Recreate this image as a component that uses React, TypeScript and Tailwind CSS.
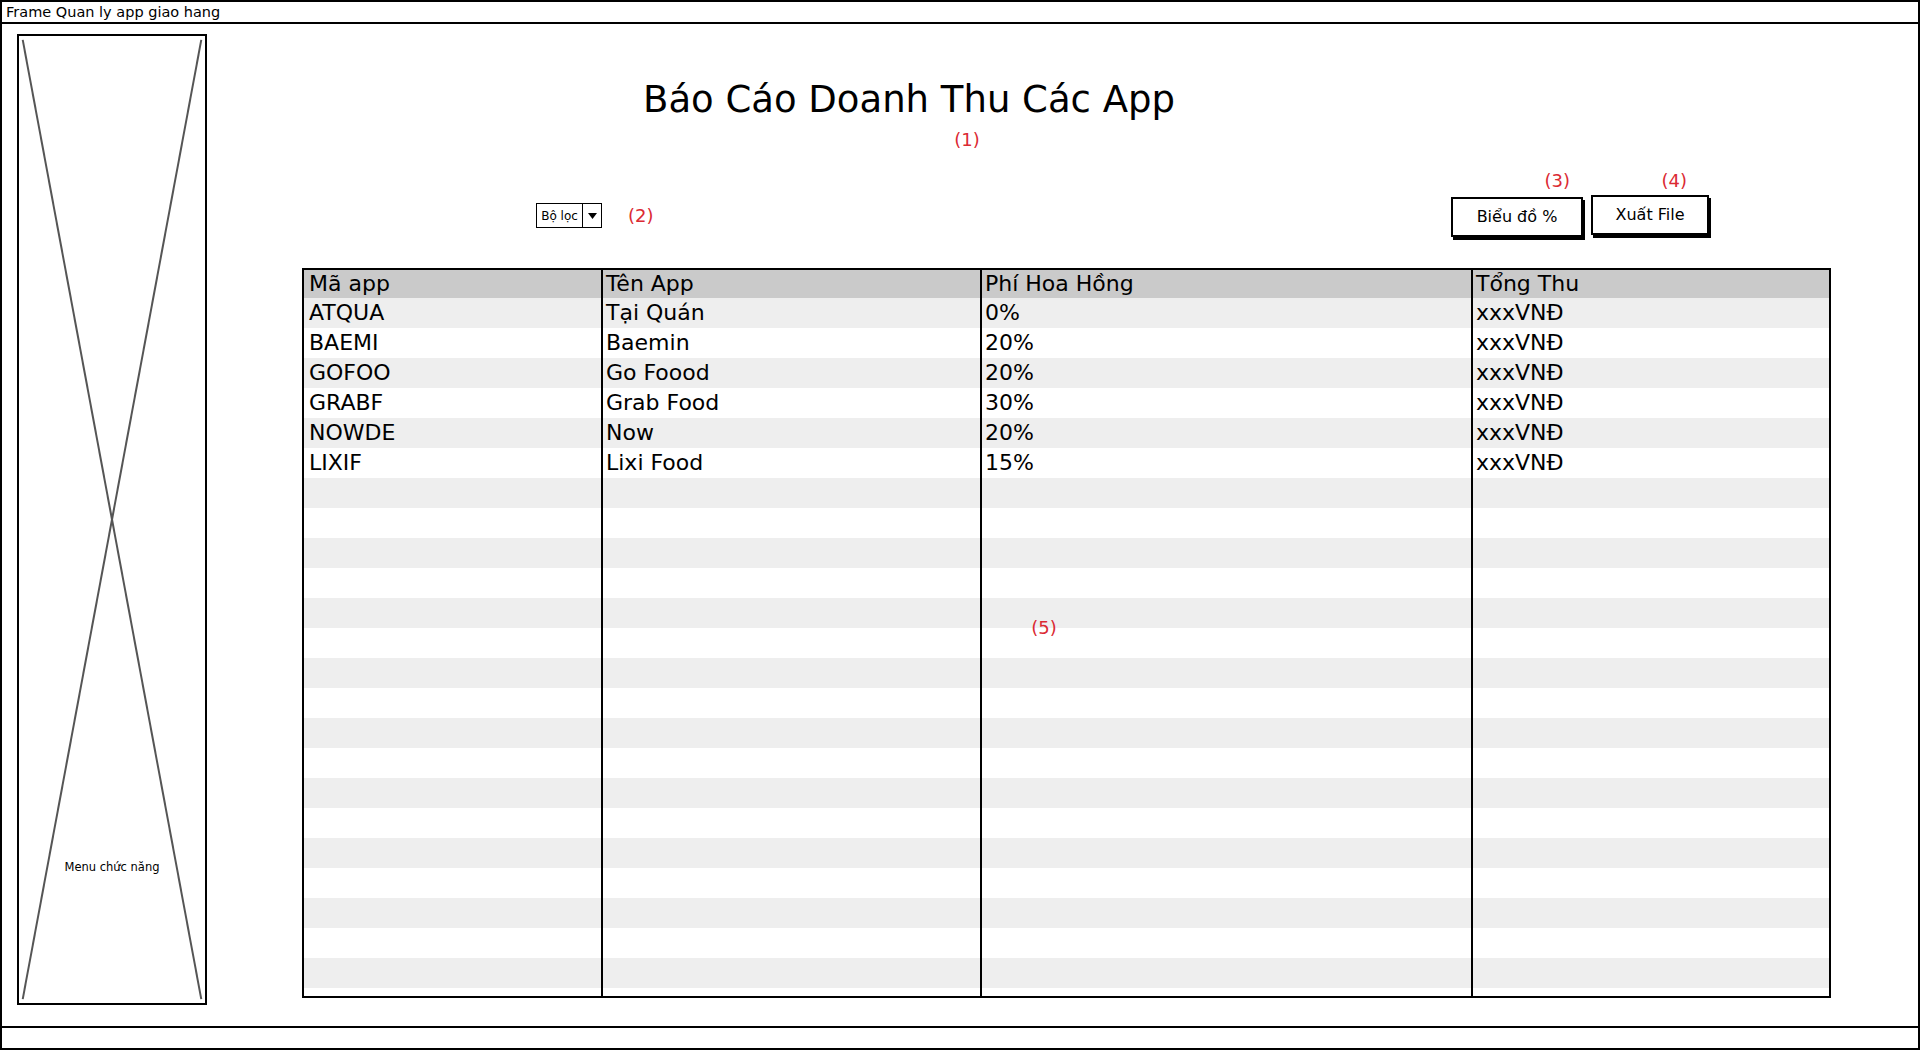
import React from 'react';

// Wireframe: Báo Cáo Doanh Thu Các App

const FONT = "font-['DejaVu_Sans','Noto_Sans',sans-serif]";

const rows = [
  { ma: 'ATQUA', ten: 'Tại Quán', phi: '0%', tong: 'xxxVNĐ' },
  { ma: 'BAEMI', ten: 'Baemin', phi: '20%', tong: 'xxxVNĐ' },
  { ma: 'GOFOO', ten: 'Go Foood', phi: '20%', tong: 'xxxVNĐ' },
  { ma: 'GRABF', ten: 'Grab Food', phi: '30%', tong: 'xxxVNĐ' },
  { ma: 'NOWDE', ten: 'Now', phi: '20%', tong: 'xxxVNĐ' },
  { ma: 'LIXIF', ten: 'Lixi Food', phi: '15%', tong: 'xxxVNĐ' },
];

function Label({ children }: { children: React.ReactNode }) {
  return <span className="text-[18px] leading-[22px] text-[#db2a33]">{children}</span>;
}

function SidebarPlaceholder() {
  return (
    <div className="relative ml-[15px] mt-[10px] mb-[21px] w-[190px] border-2 border-black bg-white">
      <svg className="absolute inset-0 h-full w-full" viewBox="0 0 100 100" preserveAspectRatio="none">
        <line x1="2" y1="0.4" x2="98" y2="99.6" stroke="#555" strokeWidth="2" vectorEffect="non-scaling-stroke" />
        <line x1="98" y1="0.4" x2="2" y2="99.6" stroke="#555" strokeWidth="2" vectorEffect="non-scaling-stroke" />
      </svg>
      <div className="absolute inset-x-0 bottom-[127px] text-center text-[11.5px] leading-[18px] text-black">
        Menu chức năng
      </div>
    </div>
  );
}

function FilterBox() {
  return (
    <div className="flex h-[25px] w-[66px] border-[1.5px] border-black bg-white">
      <div className="flex flex-1 items-center justify-center text-[12px] leading-none">Bộ lọc</div>
      <div className="flex w-[19px] items-center justify-center border-l-[1.5px] border-black">
        <svg width="9" height="6" viewBox="0 0 9 6">
          <path d="M0 0 L9 0 L4.5 6 Z" fill="#000" />
        </svg>
      </div>
    </div>
  );
}

function ReportTable() {
  const stripes = Array.from({ length: 24 }, (_, i) => rows[i] ?? null);
  return (
    <div className="relative ml-[95px] mt-[31px] h-[730px] w-[1529px] overflow-hidden border-2 border-black bg-white">
      <div className="grid h-[28px] grid-cols-[299px_379px_491px_1fr] bg-[#cacaca] text-[22px] leading-[28px]">
        <div className="border-r-2 border-black pl-[5px]">Mã app</div>
        <div className="border-r-2 border-black pl-[3px]">Tên App</div>
        <div className="border-r-2 border-black pl-[3px]">Phí Hoa Hồng</div>
        <div className="pl-[3px]">Tổng Thu</div>
      </div>
      {stripes.map((r, i) => (
        <div
          key={i}
          className={`grid h-[30px] grid-cols-[299px_379px_491px_1fr] text-[22px] leading-[30px] ${
            i % 2 === 0 ? 'bg-[#eeeeee]' : 'bg-white'
          }`}
        >
          <div className="border-r-2 border-black pl-[5px]">{r?.ma}</div>
          <div className="border-r-2 border-black pl-[3px]">{r?.ten}</div>
          <div className="border-r-2 border-black pl-[3px]">{r?.phi}</div>
          <div className="pl-[3px]">{r?.tong}</div>
        </div>
      ))}
      <div className="absolute left-[720px] top-[347px] w-[40px] text-center">
        <Label>(5)</Label>
      </div>
    </div>
  );
}

export default function App() {
  return (
    <div className={`${FONT} flex h-[1050px] w-[1920px] flex-col border-2 border-black bg-white text-black`}>
      {/* Title bar */}
      <div className="h-[22px] border-b-2 border-black pl-[4px] text-[14.5px] leading-[20px]">
        Frame Quan ly app giao hang
      </div>

      {/* Main */}
      <div className="flex flex-1">
        <SidebarPlaceholder />

        <div className="flex flex-1 flex-col">
          <div className="ml-[352px] mt-[54px] w-[700px] text-center text-[37px] leading-[44px]">
            Báo Cáo Doanh Thu Các App
          </div>
          <div className="ml-[720px] mt-[7px] w-[80px] text-center">
            <Label>(1)</Label>
          </div>

          {/* Filter + actions */}
          <div className="mt-[17px] flex items-start">
            <div className="ml-[329px] mt-[33px] flex items-center gap-[26px]">
              <FilterBox />
              <Label>(2)</Label>
            </div>
            <div className="ml-auto mr-[209px] flex gap-[8px]">
              <div className="flex flex-col items-end">
                <div className="pr-[13px]">
                  <Label>(3)</Label>
                </div>
                <button className="mt-[3px] h-[40px] w-[132px] border-2 border-black bg-white text-[16px] shadow-[2px_3px_0_#000]">
                  Biểu đồ %
                </button>
              </div>
              <div className="flex flex-col items-end">
                <div className="pr-[22px]">
                  <Label>(4)</Label>
                </div>
                <button className="mt-[1px] h-[40px] w-[118px] border-2 border-black bg-white text-[16px] shadow-[2px_3px_0_#000]">
                  Xuất File
                </button>
              </div>
            </div>
          </div>

          <ReportTable />
        </div>
      </div>

      {/* Bottom bar */}
      <div className="h-[22px] border-t-2 border-black" />
    </div>
  );
}
